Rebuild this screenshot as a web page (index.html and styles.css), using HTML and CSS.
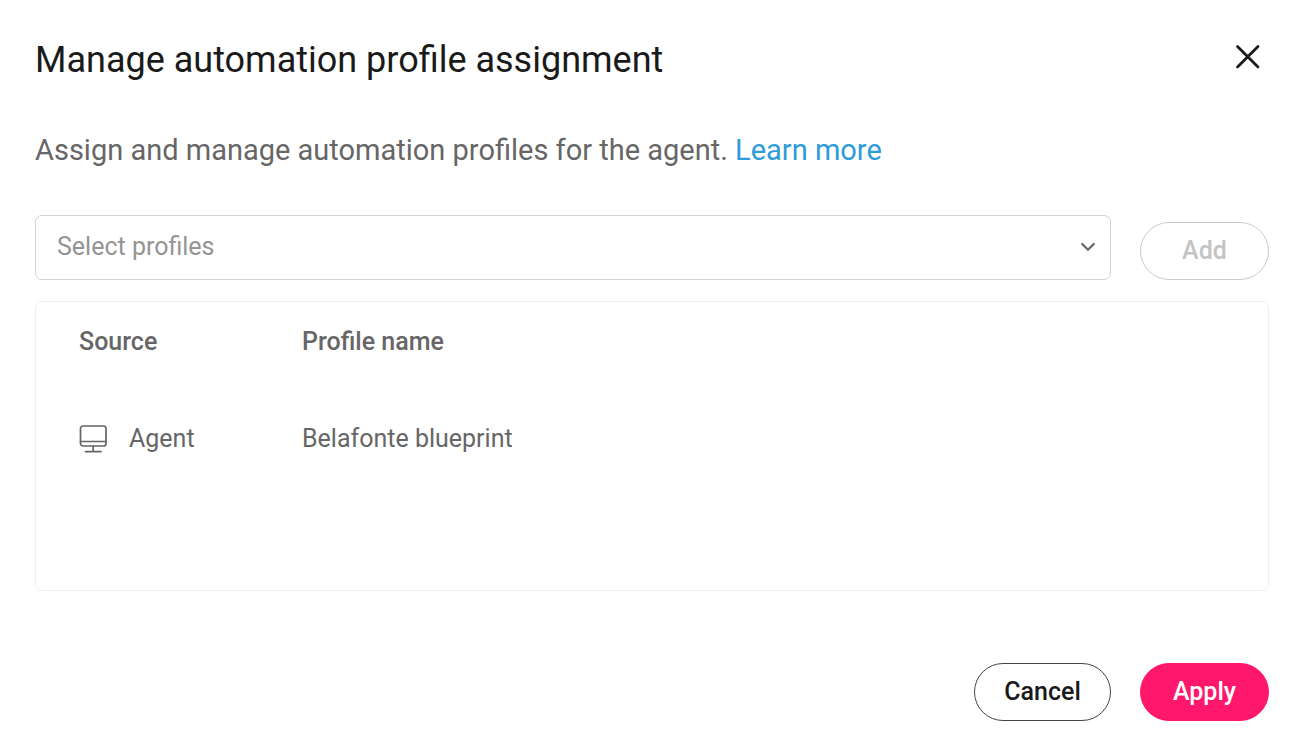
FILE: index.html
```html
<!DOCTYPE html>
<html lang="en">
<head>
<meta charset="utf-8">
<meta name="viewport" content="width=device-width, initial-scale=1">
<title>Manage automation profile assignment</title>
<link rel="stylesheet" href="styles.css">
</head>
<body>
<main class="dialog" role="dialog" aria-labelledby="dialog-title">
  <header class="dialog-header">
    <h1 class="dialog-title" id="dialog-title">Manage automation profile assignment</h1>
    <button class="close-button" type="button" aria-label="Close">
      <svg width="26" height="26" viewBox="0 0 26 26" fill="none" stroke="currentColor" stroke-width="2.8" stroke-linecap="round" aria-hidden="true"><path d="M2.500 2.500l20.500 20.500M23 2.500L2.500 23"/></svg>
    </button>
  </header>
  <p class="intro">Assign and manage automation profiles for the agent. <a class="link" href="#">Learn more</a></p>
  <form class="picker">
    <div class="select-wrap">
      <select class="select" aria-label="Select profiles">
        <option>Select profiles</option>
      </select>
      <svg class="chevron" width="16" height="10" viewBox="0 0 16 10" fill="none" stroke="currentColor" stroke-width="2.2" stroke-linecap="round" stroke-linejoin="round" aria-hidden="true"><path d="M2.200 2L8 7.700L13.800 2"/></svg>
    </div>
    <button class="button button-add" type="button" disabled>Add</button>
  </form>
  <section class="panel">
    <table class="profiles">
      <thead>
        <tr><th class="source-column" scope="col">Source</th><th scope="col">Profile name</th></tr>
      </thead>
      <tbody>
        <tr>
          <td>
            <span class="source">
              <svg width="28" height="28" viewBox="0 0 28 28" fill="none" stroke="currentColor" stroke-width="1.700" stroke-linecap="round" aria-hidden="true"><rect x="1.500" y="1" width="25.500" height="20" rx="2.500"/><path d="M1.500 16.500h25.500M14.200 21v5.500M6.500 26.600h15.500"/></svg>
              Agent
            </span>
          </td>
          <td>Belafonte blueprint</td>
        </tr>
      </tbody>
    </table>
  </section>
  <footer class="actions">
    <button class="button button-cancel" type="button">Cancel</button>
    <button class="button button-apply" type="button">Apply</button>
  </footer>
</main>
</body>
</html>
```
FILE: styles.css
```css
* { box-sizing: border-box; }
body {
  margin: 0;
  background: #fff;
  color: #666;
  font-family: Roboto, "Liberation Sans", sans-serif;
  font-size: 25px;
  line-height: 32px;
}
.dialog { padding: 36px 33px 31px 35px; }
.dialog-header {
  display: flex;
  align-items: flex-start;
  justify-content: space-between;
}
.dialog-title {
  margin: 0;
  color: #1a1a1a;
  font-size: 36px;
  font-weight: 400;
  line-height: 48px;
}
.close-button {
  display: flex;
  padding: 8px;
  border: 0;
  background: none;
  color: #1a1a1a;
}
.intro {
  margin: 46px 0 0;
  font-size: 29px;
  line-height: 40px;
}
.link { color: #2f9bd8; text-decoration: none; }
.picker {
  display: flex;
  align-items: flex-end;
  gap: 29px;
  margin-top: 45px;
}
.select-wrap { position: relative; flex: 1; }
.select {
  display: block;
  width: 100%;
  height: 65px;
  padding: 0 48px 2px 21px;
  border: 1px solid #d1d1d1;
  border-radius: 7px;
  appearance: none;
  background: #fff;
  color: #949494;
  font: inherit;
}
.chevron {
  position: absolute;
  top: 27px;
  right: 15px;
  pointer-events: none;
}
.button {
  height: 58px;
  padding: 0 28px;
  border: 1px solid #444;
  border-radius: 29px;
  background: #fff;
  font: inherit;
  font-weight: 500;
}
.button-add { width: 129px; border-color: #ccc; color: #c4c4c4; }
.panel {
  min-height: 290px;
  margin-top: 21px;
  padding: 24px 43px;
  border: 1px solid #eee;
  border-radius: 7px;
}
.profiles { width: 100%; border-collapse: collapse; table-layout: fixed; }
.profiles th { padding: 0 0 65px; font-weight: 500; text-align: left; }
.profiles td { padding: 0; }
.source-column { width: 223px; }
.source { display: flex; align-items: center; gap: 22px; }
.actions {
  display: flex;
  justify-content: flex-end;
  gap: 29px;
  margin-top: 72px;
}
.button-cancel { width: 137px; color: #1a1a1a; }
.button-apply { width: 129px; border-color: #ff176b; background: #ff176b; color: #fff; }
```
